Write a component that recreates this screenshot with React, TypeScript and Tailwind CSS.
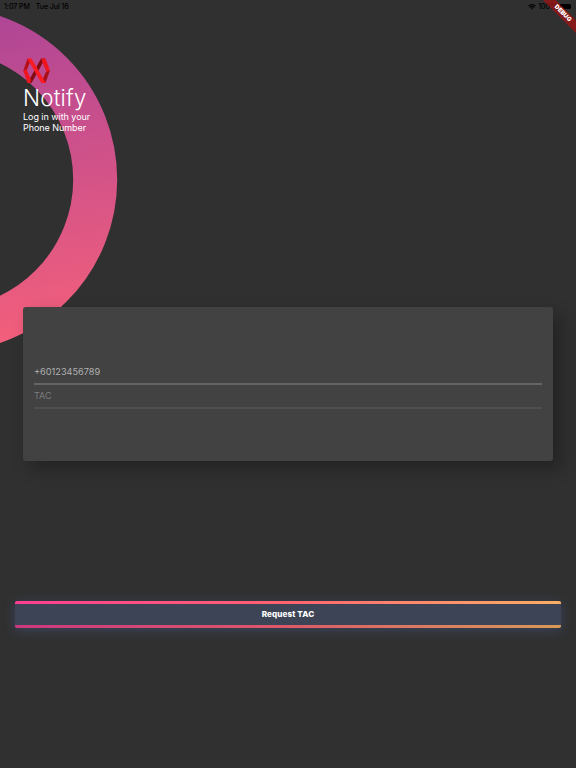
import { useState } from 'react'

function StatusBar() {
  return (
    <div className="relative flex h-[12px] items-center justify-between pt-px pl-1 pr-[5px] text-[7.1px] leading-none font-medium text-black">
      <div className="flex gap-[6px] tracking-[-0.1px]">
        <span>1:07 PM</span>
        <span>Tue Jul 16</span>
      </div>
      <div className="flex items-center gap-[2px]">
        <svg width="8" height="6" viewBox="0 0 8 6" fill="none" stroke="currentColor" strokeWidth="1.2">
          <path d="M0.5 2.2 Q4 -0.9 7.5 2.2" />
          <path d="M1.8 3.6 Q4 1.7 6.2 3.6" />
          <path d="M3 4.3 L4 5.7 L5 4.3 Q4 3.6 3 4.3Z" fill="currentColor" stroke="none" />
        </svg>
        <span className="tracking-[-0.1px]">100%</span>
        <span className="h-[5px] w-[12px] rounded-[1.5px] bg-black" />
      </div>
    </div>
  )
}

function DebugBanner() {
  return (
    <div className="pointer-events-none absolute top-0 right-0 h-[40px] w-[40px] overflow-hidden">
      <div className="absolute top-[9px] -right-[17px] flex h-[8.5px] w-[60px] rotate-45 items-center justify-center bg-[#a01313]/75 text-[6px] leading-none font-black text-white">
        DEBUG
      </div>
    </div>
  )
}

function Ring() {
  return (
    <svg className="absolute top-0 left-0" width="120" height="360" viewBox="0 0 120 360" fill="none">
      <defs>
        <linearGradient id="ring" gradientUnits="userSpaceOnUse" x1="-20" y1="7" x2="40" y2="353">
          <stop offset="0" stopColor="#ad4597" />
          <stop offset="1" stopColor="#f6607a" />
        </linearGradient>
      </defs>
      <circle cx="-55.5" cy="179.5" r="150.7" stroke="url(#ring)" strokeWidth="44" />
    </svg>
  )
}

function Logo() {
  return (
    <svg width="27" height="26" viewBox="0 0 27 26">
      <path d="M18 0.5 L22.2 0.5 L8.6 25 L4.5 25 Z" fill="#850b12" />
      <path d="M4.5 0.5 L0.2 13 L3.4 13 L8 2 Z" fill="#b5101a" />
      <path d="M26.9 12.5 L22.5 25 L19 23 L23.7 12 Z" fill="#a80e16" />
      <path d="M0.2 12.5 L3.5 11.5 L8 21.5 L7.6 25 L4.5 25 Z" fill="#ee151f" />
      <path d="M18.4 0.5 L22.5 0.5 L27 12.5 L23.6 14 L19.2 4 Z" fill="#ee151f" />
      <path d="M4.3 0.5 L8.6 0.5 L22.7 25 L18.4 25 Z" fill="#fb1b23" />
    </svg>
  )
}

export default function App() {
  const [phone, setPhone] = useState('+60123456789')
  const [tac, setTac] = useState('')

  return (
    <div className="relative flex h-[768px] w-full flex-col overflow-hidden bg-[#303030] font-['Inter','Liberation_Sans',sans-serif]">
      <Ring />
      <StatusBar />

      <header className="relative mt-[45.5px] ml-[23px] text-white">
        <Logo />
        <h1 className="text-[22.4px] leading-[27px] font-light tracking-[0.2px]">Notify</h1>
        <p className="text-[9px] leading-[11px] tracking-[-0.05px]">
          Log in with your
          <br />
          Phone Number
        </p>
      </header>

      {/* login card */}
      <section className="relative mx-[23px] mt-[174.5px] h-[154px] rounded-[3px] bg-[#424242] px-[11px] pt-[53px] shadow-[8px_8px_18px_rgba(0,0,0,0.28)]">
        <input
          value={phone}
          onChange={e => setPhone(e.target.value)}
          className="block h-[25px] w-full border-b-2 border-[#646464] bg-transparent pb-px text-[9.2px] text-[#b0b0b0] outline-none"
        />
        <input
          value={tac}
          onChange={e => setTac(e.target.value)}
          placeholder="TAC"
          className="block h-[24px] w-full border-b-2 border-[#4e4e4e] bg-transparent pb-px text-[9px] outline-none placeholder:text-[#7c7c7c]"
        />
      </section>

      <button className="relative mx-[15px] mt-[139.5px] flex h-[27.5px] flex-col rounded-[2px] bg-[#3c4456] shadow-[0_2px_12px_rgba(75,95,155,0.45)]">
        <span className="h-[3px] w-full rounded-t-[2px] bg-linear-to-r from-[#fc3d91] via-[#ff6370] to-[#f9ae63]" />
        <span className="flex w-full flex-1 items-center justify-center text-[8.1px] font-extrabold tracking-[0.1px] text-white">Request TAC</span>
        <span className="h-[3px] w-full rounded-b-[2px] bg-linear-to-r from-[#cc387f] via-[#dc5968] to-[#d89958]" />
      </button>

      <DebugBanner />
    </div>
  )
}
